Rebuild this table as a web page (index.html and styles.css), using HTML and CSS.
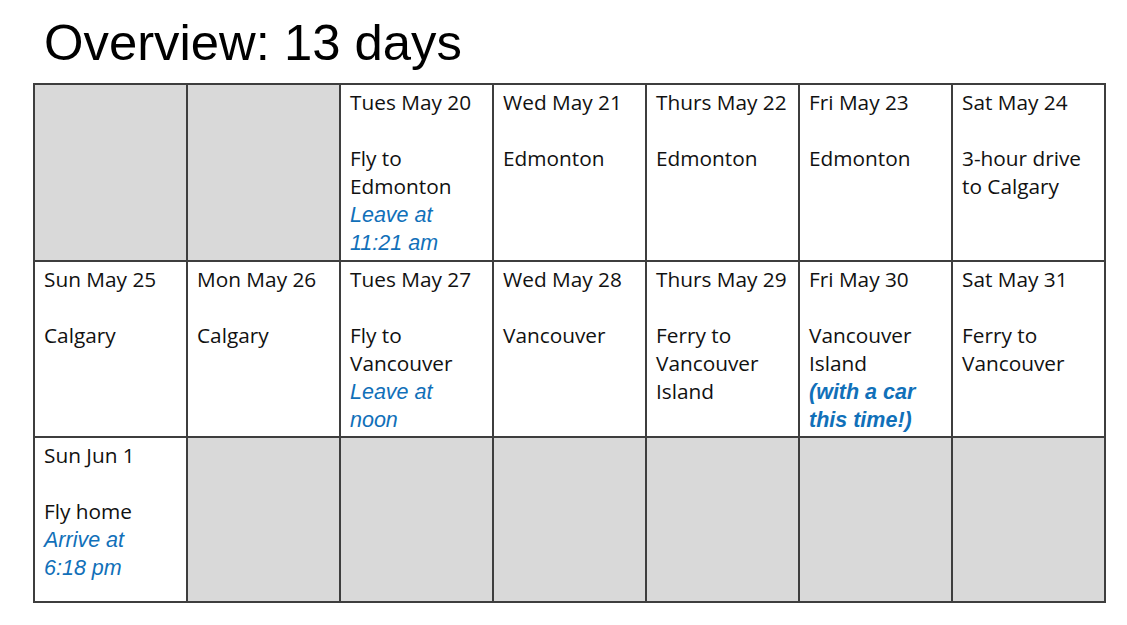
FILE: index.html
```html
<!DOCTYPE html>
<html>
<head>
<meta charset="utf-8">
<link rel="stylesheet" href="styles.css">
</head>
<body>
<div class="slide">
  <h1 class="title">Overview: 13 days</h1>
  <table class="cal">
    <tr class="r1">
      <td class="empty"></td>
      <td class="empty"></td>
      <td><div class="d">Tues May 20</div><div class="gap"></div><div>Fly to Edmonton</div><div class="note">Leave at<br>11:21 am</div></td>
      <td><div class="d">Wed May 21</div><div class="gap"></div><div>Edmonton</div></td>
      <td><div class="d">Thurs May 22</div><div class="gap"></div><div>Edmonton</div></td>
      <td><div class="d">Fri May 23</div><div class="gap"></div><div>Edmonton</div></td>
      <td><div class="d">Sat May 24</div><div class="gap"></div><div>3-hour drive to Calgary</div></td>
    </tr>
    <tr class="r2">
      <td><div class="d">Sun May 25</div><div class="gap"></div><div>Calgary</div></td>
      <td><div class="d">Mon May 26</div><div class="gap"></div><div>Calgary</div></td>
      <td><div class="d">Tues May 27</div><div class="gap"></div><div>Fly to Vancouver</div><div class="note">Leave at<br>noon</div></td>
      <td><div class="d">Wed May 28</div><div class="gap"></div><div>Vancouver</div></td>
      <td><div class="d">Thurs May 29</div><div class="gap"></div><div>Ferry to Vancouver Island</div></td>
      <td><div class="d">Fri May 30</div><div class="gap"></div><div>Vancouver Island</div><div class="note bold">(with a car<br>this time!)</div></td>
      <td><div class="d">Sat May 31</div><div class="gap"></div><div>Ferry to Vancouver</div></td>
    </tr>
    <tr class="r3">
      <td><div class="d">Sun Jun 1</div><div class="gap"></div><div>Fly home</div><div class="note">Arrive at<br>6:18 pm</div></td>
      <td class="empty"></td>
      <td class="empty"></td>
      <td class="empty"></td>
      <td class="empty"></td>
      <td class="empty"></td>
      <td class="empty"></td>
    </tr>
  </table>
</div>
</body>
</html>
```
FILE: styles.css
```css
html, body {
  margin: 0;
  padding: 0;
  background: #fff;
}
.slide {
  width: 1127px;
  height: 625px;
  padding: 11px 0 0 33px;
  box-sizing: border-box;
}
.title {
  margin: 0 0 0 11px;
  font-family: "Liberation Sans", Arial, sans-serif;
  font-weight: normal;
  font-size: 50.8px;
  line-height: 64px;
  height: 72px;
  color: #000;
}
.cal {
  border-collapse: collapse;
  table-layout: fixed;
  width: 1069px;
  font-family: "Open Sans", sans-serif;
  font-size: 20.8px;
  line-height: 28px;
  color: #111;
}
.cal td {
  width: 153px;
  border: 2px solid #3e3e3e;
  vertical-align: top;
  padding: 3px 8px 0 9px;
  box-sizing: border-box;
}
.r1 td { height: 177px; }
.r2 td { height: 176px; }
.r3 td { height: 165px; }
.cal td.empty {
  background: #d9d9d9;
}
.gap { height: 28px; }
.note {
  color: #1170b9;
  font-family: "Liberation Sans", Arial, sans-serif;
  font-size: 21.5px;
  font-style: italic;
  padding-top: 1px;
}
.note.bold { font-weight: bold; }
```
